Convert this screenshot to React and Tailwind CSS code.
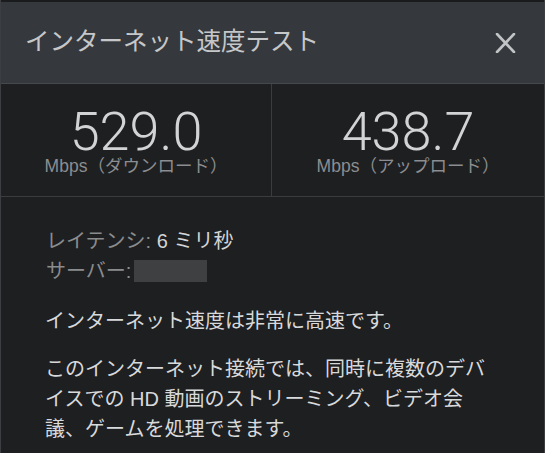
import React from "react";

const jp = { fontFamily: '"Liberation Sans", "Noto Sans CJK JP", sans-serif' };

function Stat({ value, label, divider }) {
    return (
        <div className={`flex flex-col items-center pt-[24px] ${divider ? "border-r border-[#3a3c3f]" : ""}`}>
            <div className="text-[54px] leading-[48px] font-light text-[#d2d3d5]" style={{ fontFamily: "Roboto, sans-serif" }}>
                {value}
            </div>
            <div className="text-[17.5px] leading-[20px] text-[#8c8d90]">{label}</div>
        </div>
    );
}

export default function App() {
    return (
        <div className="w-[545px] h-[453px] overflow-hidden bg-[#1e1f21] border-x border-[#3c3e41]" style={jp}>
            <div className="h-[2px] bg-[#1a1b1d]" />
            <header className="h-[82px] bg-[#35383c] border-b border-[#45484c] flex items-center justify-between pl-[24px] pr-[28px]">
                <h1 className="text-[24.5px] text-[#c6c7c9] font-normal">インターネット速度テスト</h1>
                <button className="w-[22px] h-[22px] flex items-center justify-center">
                    <svg width="21" height="20" viewBox="0 0 21 20">
                        <path d="M2 1 L19 19 M19 1 L2 19" stroke="#c2c3c5" strokeWidth="2.6" strokeLinecap="round" />
                    </svg>
                </button>
            </header>

            <div className="grid grid-cols-[271px_1fr] h-[113px] border-b border-[#3a3c3f]">
                <Stat value="529.0" label="Mbps（ダウンロード）" divider />
                <Stat value="438.7" label="Mbps（アップロード）" />
            </div>

            <div className="pl-[44px] pt-[29px] text-[20px] leading-[30px]">
                <p className="pl-[1px]">
                    <span className="text-[#8b8c8e]">レイテンシ:</span>
                    <span className="text-[#d3d4d6]"> 6 ミリ秒</span>
                </p>
                <p className="pl-[1px] flex items-center">
                    <span className="text-[#8b8c8e]">サーバー:</span>
                    <span className="inline-block ml-[3px] w-[73px] h-[22px] bg-[#3f4042]" />
                </p>
                <p className="mt-[20px] text-[#d8d9db]">インターネット速度は非常に高速です。</p>
                <p className="mt-[18px] max-w-[448px] text-[#d8d9db]">
                    このインターネット接続では、同時に複数のデバイスでの HD 動画のストリーミング、ビデオ会議、ゲームを処理できます。
                </p>
            </div>
        </div>
    );
}
